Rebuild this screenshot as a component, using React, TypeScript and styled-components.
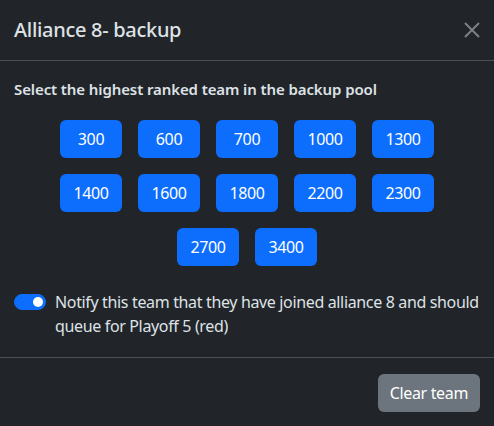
import { useState } from 'react'
import styled, { createGlobalStyle } from 'styled-components'

const GlobalStyle = createGlobalStyle`
  html, body {
    margin: 0;
    background: #212529;
  }
  body {
    font-family: 'Noto Sans', 'Open Sans', sans-serif;
    color: #dee2e6;
    font-size: 16px;
    line-height: 1.5;
    letter-spacing: -0.35px;
  }
`

const Modal = styled.div`
  width: 494px;
  height: 426px;
  background: #212529;
  display: flex;
  flex-direction: column;
  overflow: hidden;
`
const Header = styled.header`
  display: flex;
  align-items: center;
  justify-content: space-between;
  height: 61px;
  padding: 0 14px;
  border-bottom: 1px solid #495057;
  box-sizing: border-box;
`
const Title = styled.h5`
  margin: 0;
  font-size: 20px;
  font-weight: 500;
  line-height: 1.5;
  letter-spacing: -0.3px;
`
const CloseButton = styled.button`
  border: none;
  background: none;
  padding: 0;
  width: 16px;
  height: 16px;
  display: flex;
  cursor: pointer;
  color: #7d8084;
`
const Body = styled.main`
  padding: 16px 14px 0;
  flex: 1;
  border-bottom: 1px solid #495057;
`
const Prompt = styled.p`
  margin: 0;
  font-size: 15px;
  font-weight: 600;
  line-height: 24px;
  letter-spacing: -0.1px;
`
const TeamGrid = styled.div`
  display: flex;
  flex-wrap: wrap;
  justify-content: center;
  gap: 16px;
  margin: 19px auto 0;
  width: 374px;
`
const TeamButton = styled.button<{ $active?: boolean }>`
  width: 62px;
  height: 38px;
  border: none;
  border-radius: 6px;
  background: ${(p) => (p.$active ? '#0b5ed7' : '#0d6efd')};
  color: #fff;
  font-family: inherit;
  font-size: 16px;
  letter-spacing: inherit;
  padding: 0;
  cursor: pointer;
`
const NotifyRow = styled.label`
  display: flex;
  align-items: flex-start;
  gap: 9px;
  margin-top: 24px;
  cursor: pointer;
`
const Switch = styled.span<{ $on: boolean }>`
  flex: none;
  width: 32px;
  height: 16px;
  margin-top: 4px;
  border-radius: 8px;
  background: ${(p) => (p.$on ? '#0d6efd' : 'transparent')};
  border: 1px solid ${(p) => (p.$on ? '#0d6efd' : '#6c757d')};
  box-sizing: border-box;
  display: flex;
  align-items: center;
  justify-content: ${(p) => (p.$on ? 'flex-end' : 'flex-start')};
  padding: 0 2px;

  &::after {
    content: '';
    width: 10px;
    height: 10px;
    border-radius: 50%;
    background: ${(p) => (p.$on ? '#fff' : '#6c757d')};
  }
`
const Footer = styled.footer`
  display: flex;
  justify-content: flex-end;
  padding: 16px 14px 14px;
`
const SecondaryButton = styled.button`
  height: 38px;
  padding: 0 12px;
  border: none;
  border-radius: 6px;
  background: #6c757d;
  color: #fff;
  font-family: inherit;
  font-size: 16px;
  letter-spacing: inherit;
  cursor: pointer;
`

const teams = [300, 600, 700, 1000, 1300, 1400, 1600, 1800, 2200, 2300, 2700, 3400]

export default function App() {
  const [notify, setNotify] = useState(true)
  const [picked, setPicked] = useState<number | null>(null)

  return (
    <>
      <GlobalStyle />
      <Modal>
        <Header>
          <Title>Alliance 8- backup</Title>
          <CloseButton aria-label="Close">
            <svg width="16" height="16" viewBox="0 0 16 16">
              <path d="M1 1L15 15M15 1L1 15" stroke="currentColor" strokeWidth="2" />
            </svg>
          </CloseButton>
        </Header>
        <Body>
          <Prompt>Select the highest ranked team in the backup pool</Prompt>
          <TeamGrid>
            {teams.map((team) => (
              <TeamButton key={team} $active={picked === team} onClick={() => setPicked(team)}>
                {team}
              </TeamButton>
            ))}
          </TeamGrid>
          <NotifyRow onClick={() => setNotify(!notify)}>
            <Switch $on={notify} />
            <span>Notify this team that they have joined alliance 8 and should queue for Playoff 5 (red)</span>
          </NotifyRow>
        </Body>
        <Footer>
          <SecondaryButton onClick={() => setPicked(null)}>Clear team</SecondaryButton>
        </Footer>
      </Modal>
    </>
  )
}
